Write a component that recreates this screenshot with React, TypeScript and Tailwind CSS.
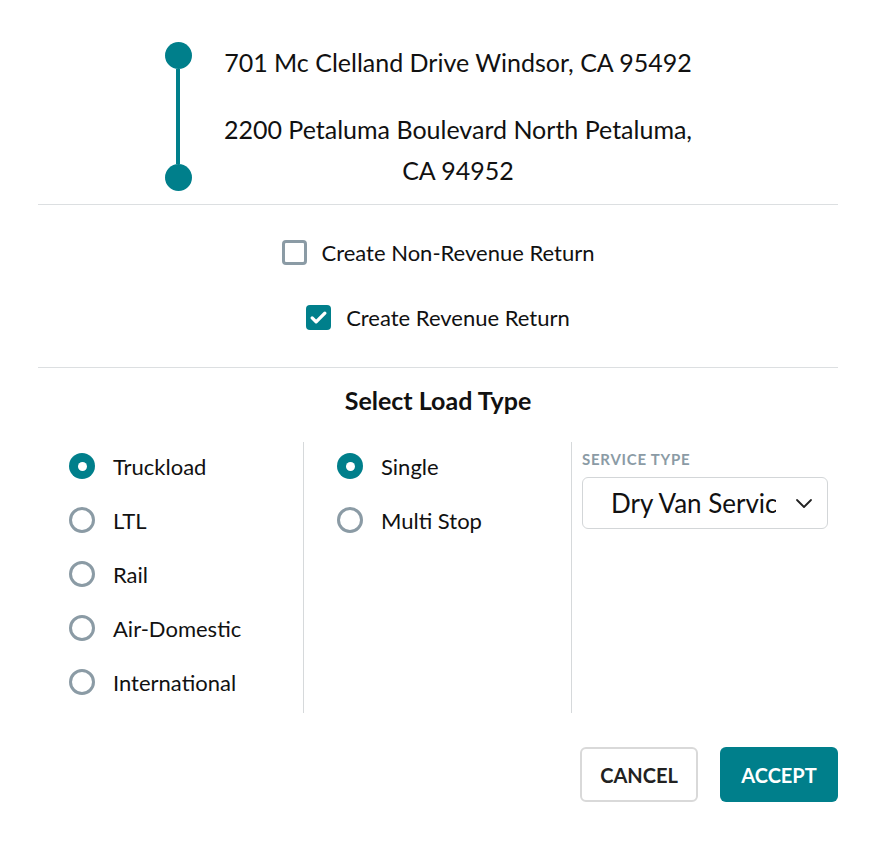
import { useState } from 'react';

const TEAL = 'bg-[#007f8b]';

const loadTypes = ['Truckload', 'LTL', 'Rail', 'Air-Domestic', 'International'];
const stopTypes = ['Single', 'Multi Stop'];

const Radio = ({ checked, label, onClick }: { checked: boolean; label: string; onClick: () => void }) => (
  <button onClick={onClick} className="flex h-[30px] items-center gap-[18px] text-left">
    {checked ? (
      <span className={`flex h-[26px] w-[26px] items-center justify-center rounded-full ${TEAL}`}>
        <span className="h-[9px] w-[9px] rounded-full bg-white" />
      </span>
    ) : (
      <span className="h-[26px] w-[26px] rounded-full border-[3px] border-[#8b9ba5]" />
    )}
    <span className="text-[22px] text-[#111]">{label}</span>
  </button>
);

const Checkbox = ({ checked, label, onClick }: { checked: boolean; label: string; onClick: () => void }) => (
  <button onClick={onClick} className="flex h-[30px] items-center gap-[15px]">
    {checked ? (
      <span className={`flex h-[25px] w-[25px] items-center justify-center rounded-[4px] ${TEAL}`}>
        <svg width="19" height="19" viewBox="0 0 24 24" fill="none" stroke="white" strokeWidth="4.2" strokeLinecap="round" strokeLinejoin="round">
          <path d="M4 12.5l5 5L20 6.5" />
        </svg>
      </span>
    ) : (
      <span className="h-[25px] w-[25px] rounded-[4px] border-[3px] border-[#8b9ba5]" />
    )}
    <span className="text-[22px] text-[#111]">{label}</span>
  </button>
);

export default function App() {
  const [nonRevenue, setNonRevenue] = useState(false);
  const [revenue, setRevenue] = useState(true);
  const [loadType, setLoadType] = useState('Truckload');
  const [stopType, setStopType] = useState('Single');

  return (
    <div className="min-h-screen bg-white font-['Lato',sans-serif] text-[#111]">
      <div className="mx-auto w-[800px]">
        {/* route timeline */}
        <div className="flex items-center pb-[13px] pl-[127px] pt-[42px]">
          <div className="flex h-[149px] w-[26px] flex-col items-center">
            <span className={`h-[27px] w-[27px] shrink-0 rounded-full ${TEAL}`} />
            <span className={`w-[4px] flex-1 ${TEAL}`} />
            <span className={`h-[27px] w-[27px] shrink-0 rounded-full ${TEAL}`} />
          </div>
          <div className="ml-[26px] flex w-[482px] flex-col gap-[26px] text-center text-[25px] leading-[41px]">
            <p>701 Mc Clelland Drive Windsor, CA 95492</p>
            <p>2200 Petaluma Boulevard North Petaluma, CA 94952</p>
          </div>
        </div>

        <div className="border-t border-[#dcdfe1]" />

        {/* return options */}
        <div className="flex flex-col items-center gap-[35px] pb-[35px] pt-[32px]">
          <Checkbox checked={nonRevenue} label="Create Non-Revenue Return" onClick={() => setNonRevenue(!nonRevenue)} />
          <Checkbox checked={revenue} label="Create Revenue Return" onClick={() => setRevenue(!revenue)} />
        </div>

        <div className="border-t border-[#dcdfe1]" />

        <h2 className="mt-[17px] text-center text-[25px] font-bold leading-[30px]">Select Load Type</h2>

        <div className="mt-[27px] grid h-[271px] grid-cols-[265px_268px_1fr]">
          <div className="flex flex-col gap-[24px] pl-[31px] pt-[9px]">
            {loadTypes.map((t) => (
              <Radio key={t} label={t} checked={loadType === t} onClick={() => setLoadType(t)} />
            ))}
          </div>
          <div className="flex flex-col gap-[24px] border-l border-[#d6d9db] pl-[33px] pt-[9px]">
            {stopTypes.map((t) => (
              <Radio key={t} label={t} checked={stopType === t} onClick={() => setStopType(t)} />
            ))}
          </div>
          <div className="border-l border-[#d6d9db] pl-[10px] pr-[10px] pt-[7px]">
            <label className="block text-[15px] font-bold uppercase leading-[20px] tracking-[0.05em] text-[#8b9ba5]">
              Service Type
            </label>
            <div className="mt-[8px] flex h-[52px] w-[246px] items-center rounded-[6px] border border-[#d3d6d8] pl-[28px] pr-[14px]">
              <span className="w-[165px] overflow-hidden whitespace-nowrap text-[26px]">Dry Van Service</span>
              <svg className="ml-auto" width="18" height="12" viewBox="0 0 18 12" fill="none" stroke="#222" strokeWidth="1.8" strokeLinecap="round" strokeLinejoin="round">
                <path d="M2 3l7 7 7-7" />
              </svg>
            </div>
          </div>
        </div>

        {/* actions */}
        <div className="mt-[34px] flex justify-end gap-[22px]">
          <button className="h-[55px] w-[118px] rounded-[6px] border-2 border-[#d9d9d9] bg-white text-[20px] font-bold text-[#222]">
            CANCEL
          </button>
          <button className={`h-[55px] w-[118px] rounded-[6px] ${TEAL} text-[20px] font-bold text-white`}>ACCEPT</button>
        </div>
      </div>
    </div>
  );
}
